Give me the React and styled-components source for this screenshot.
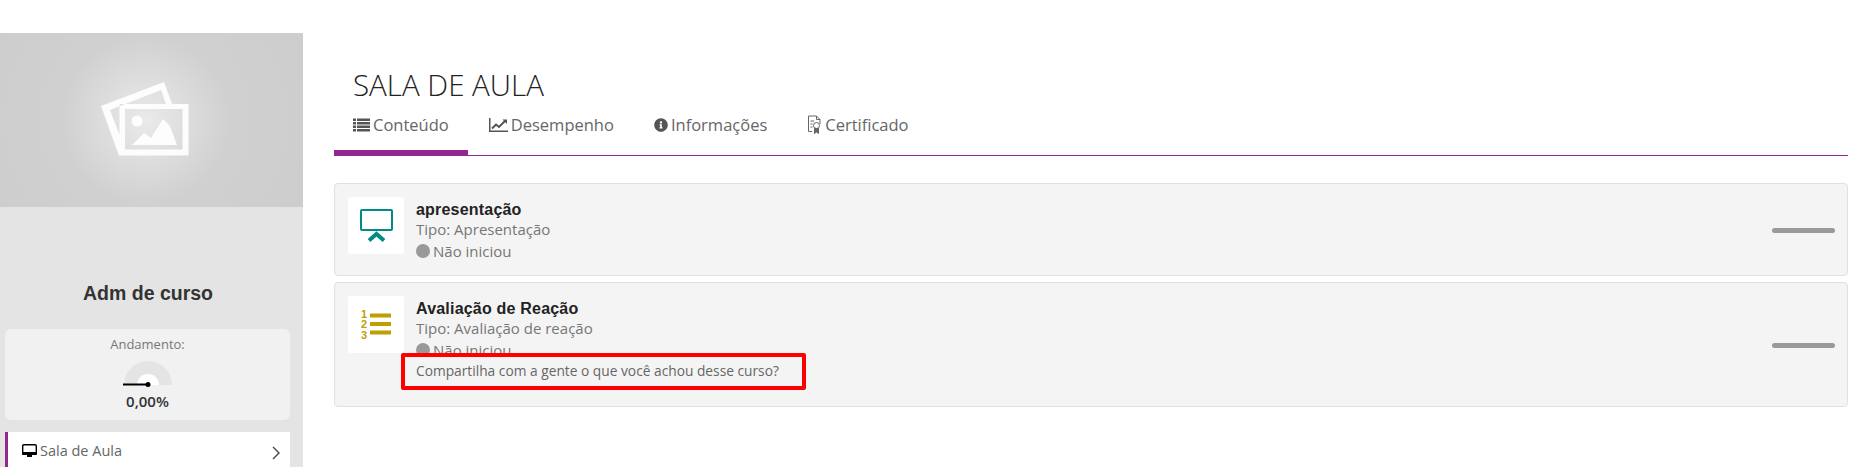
import React from 'react'
import styled, { createGlobalStyle } from 'styled-components';
import { FaInfoCircle } from 'react-icons/fa';

const GlobalStyle = createGlobalStyle`
  html, body {
    margin: 0;
    padding: 0;
    background: #fff;
    font-family: "Open Sans", sans-serif;
    color: #666;
  }
`;

const PhotoIcon = () => (
  <svg width="88" height="74" viewBox="0 0 88 74">
    <path fill="#fff" fillOpacity="0.92" fillRule="evenodd" d="M0 24 L63 0 L71 22 L87.500 22 L87.500 73.500 L18 73.500 Z M9 28 L18.500 53 L18.500 22 L65 22 L60 8 Z M24 27 L81.500 27 L81.500 67.500 L24 67.500 Z" />
    <circle cx="36" cy="39" r="5.500" fill="#fff" fillOpacity="0.92" />
    <path fill="#fff" fillOpacity="0.92" d="M31 63 L43 51 L50 56 L62 37 L69 44 L76 63 Z" />
  </svg>
);

const ListIcon = () => (
  <svg width="17" height="14" viewBox="0 0 17 14" fill="#555">
    <rect x="0" y="0.500" width="3" height="2.500" />
    <rect x="4" y="0.500" width="13" height="2.500" />
    <rect x="0" y="4" width="3" height="2.500" />
    <rect x="4" y="4" width="13" height="2.500" />
    <rect x="0" y="7.500" width="3" height="2.500" />
    <rect x="4" y="7.500" width="13" height="2.500" />
    <rect x="0" y="11" width="3" height="2.500" />
    <rect x="4" y="11" width="13" height="2.500" />
  </svg>
);

const ChartIcon = () => (
  <svg width="19" height="14" viewBox="0 0 19 14" fill="none" stroke="#555">
    <path d="M0.750 0 V13.250 H19" strokeWidth="1.500" />
    <path d="M3 10.500 L7 6.500 L10 9 L16.500 2.500" strokeWidth="2" />
    <path d="M13.500 1.500 H18 V6 Z" fill="#555" stroke="none" />
  </svg>
);

const MonitorIcon = () => (
  <svg width="15" height="14" viewBox="0 0 15 14">
    <rect x="0.700" y="0.700" width="13.600" height="9.600" rx="1.200" fill="none" stroke="#000" strokeWidth="1.400" />
    <rect x="0" y="8" width="15" height="3" rx="1" fill="#000" />
    <rect x="5" y="11" width="5" height="2" fill="#000" />
  </svg>
);

const CertificateIcon = () => (
  <svg width="15" height="19" viewBox="0 0 15 19" fill="none" stroke="#666" strokeWidth="1">
    <path d="M5 16.500 H1.500 V1 H9.500 L13 4.500 V9" />
    <path d="M9.500 1 V4.500 H13" />
    <path d="M3.500 6 H7 M3.500 9 H5.500 M3.500 12 H5.500" />
    <circle cx="9.500" cy="10.500" r="3" />
    <path d="M7.500 13 V18.500 L9.500 17 L11.500 18.500 V13" fill="#666" />
  </svg>
);

const PresentationIcon = () => (
  <svg width="33" height="33" viewBox="0 0 33 33" fill="none" stroke="#008c84">
    <rect x="1" y="1" width="31" height="20" rx="1" strokeWidth="2" />
    <path d="M9 31.500 L16.500 25 L24 31.500" strokeWidth="4" />
  </svg>
);

const RankingIcon = () => (
  <svg width="30" height="30" viewBox="0 0 30 30">
    <rect x="9" y="3.500" width="21" height="4" fill="#bc9f00" />
    <rect x="9" y="12" width="21" height="4" fill="#bc9f00" />
    <rect x="9" y="20.500" width="21" height="4" fill="#bc9f00" />
    <OrderDigit x="0" y="7.500">1</OrderDigit>
    <OrderDigit x="0" y="17.500">2</OrderDigit>
    <OrderDigit x="0" y="28.500">3</OrderDigit>
  </svg>
);

const Gauge = () => (
  <svg width="52" height="28" viewBox="0 0 52 28">
    <path d="M2 25 A24 24 0 0 1 50 25 Z" fill="#e4e4e4" />
    <path d="M15 25 A11 11 0 0 1 37 25 Z" fill="#fff" />
    <path d="M1 24.500 H26" stroke="#000" strokeWidth="2" />
    <circle cx="26" cy="24.500" r="2.500" fill="#000" />
  </svg>
);

const tabs = [
  { name: 'Conteúdo', icon: <ListIcon />, active: true },
  { name: 'Desempenho', icon: <ChartIcon /> },
  { name: 'Informações', icon: <FaInfoCircle size={14} color="#555" /> },
  { name: 'Certificado', icon: <CertificateIcon /> },
];

const App = () => {
  return (
    <Page>
      <GlobalStyle />
      <Sidebar>
        <Cover><PhotoIcon /></Cover>
        <CourseName>Adm de curso</CourseName>
        <ProgressCard>
          <ProgressLabel>Andamento:</ProgressLabel>
          <Gauge />
          <ProgressValue>0,00%</ProgressValue>
        </ProgressCard>
        <MenuItem>
          <MenuLabel><MonitorIcon /> Sala de Aula</MenuLabel>
          <Chevron viewBox="0 0 8 14"><path d="M1 1 L7 7 L1 13" /></Chevron>
        </MenuItem>
      </Sidebar>
      <Main>
        <Heading>SALA DE AULA</Heading>
        <Tabs>
          {tabs.map((tab) => (
            <Tab key={tab.name} $active={tab.active}>{tab.icon}{tab.name}</Tab>
          ))}
        </Tabs>
        <ItemList>
          <Item>
            <ItemThumb><PresentationIcon /></ItemThumb>
            <ItemBody>
              <ItemTitle>apresentação</ItemTitle>
              <ItemText>Tipo: Apresentação</ItemText>
              <ItemStatus><StatusDot />Não iniciou</ItemStatus>
            </ItemBody>
            <ItemBar />
          </Item>
          <Item $tall>
            <ItemThumb><RankingIcon /></ItemThumb>
            <ItemBody>
              <ItemTitle>Avaliação de Reação</ItemTitle>
              <ItemText>Tipo: Avaliação de reação</ItemText>
              <ItemStatus><StatusDot />Não iniciou</ItemStatus>
            </ItemBody>
            <ItemBar />
            <ShareCallout>Compartilha com a gente o que você achou desse curso?</ShareCallout>
          </Item>
        </ItemList>
      </Main>
    </Page>
  );
};

export default App;

const Page = styled.div`
  display: flex;
  height: 467px;
  overflow: hidden;
`;

const Sidebar = styled.aside`
  width: 303px;
  flex-shrink: 0;
  margin-top: 33px;
  background-color: #e4e4e4;
`;

const Cover = styled.div`
  height: 174px;
  box-sizing: border-box;
  padding: 0 14px 3px 0;
  display: flex;
  align-items: center;
  justify-content: center;
  background: radial-gradient(circle at 48% 50%, #eaeaea 0, #dcdcdc 45px, #d0d0d0 85px, #cdcdcd 100%);
`;

const CourseName = styled.h2`
  margin: 75px 0 0;
  height: 23px;
  line-height: 23px;
  text-align: center;
  font-family: "Liberation Sans", sans-serif;
  font-size: 19.500px;
  font-weight: 700;
  color: #333;
  padding-right: 7px;
`;

const ProgressCard = styled.div`
  margin: 24px 13px 0 5px;
  height: 91px;
  box-sizing: border-box;
  padding-top: 6px;
  border-radius: 6px;
  background-color: #f1f1f1;
  display: flex;
  flex-direction: column;
  align-items: center;
`;

const ProgressLabel = styled.div`
  font-size: 13px;
  line-height: 18px;
  color: #777;
  margin-bottom: 7px;
`;

const ProgressValue = styled.div`
  font-size: 15px;
  font-weight: 600;
  line-height: 19px;
  color: #333;
  margin-top: 4px;
`;

const MenuItem = styled.div`
  margin: 12px 13px 0 5px;
  height: 44px;
  box-sizing: border-box;
  padding: 9px 10px 0 14px;
  border-left: 3px solid #92278f;
  background-color: #fff;
  display: flex;
  justify-content: space-between;
  align-items: flex-start;
`;

const MenuLabel = styled.div`
  display: flex;
  align-items: center;
  gap: 3px;
  font-size: 14.500px;
  line-height: 19px;
  color: #666;
`;

const Chevron = styled.svg`
  width: 8px;
  height: 14px;
  margin-top: 5px;
  fill: none;
  stroke: #444;
  stroke-width: 1.400;
`;

const Main = styled.main`
  width: 1514px;
  margin-left: 31px;
`;

const Heading = styled.h1`
  margin: 66px 0 0;
  padding-left: 19px;
  height: 38px;
  line-height: 38px;
  font-size: 29.500px;
  font-weight: 300;
  color: #222;
`;

const Tabs = styled.nav`
  display: flex;
  height: 49px;
  margin-top: 3px;
  box-sizing: border-box;
  border-bottom: 1px solid #92278f;
`;

const Tab = styled.div`
  display: flex;
  align-items: center;
  gap: 3px;
  height: 48px;
  box-sizing: border-box;
  padding: 0 19px 8px;
  font-size: 16.500px;
  color: #666;
  border-bottom: 5px solid ${(props) => (props.$active ? '#92278f' : 'transparent')};
  margin-left: ${(props) => (props.$active ? '0' : '2px')};
`;

const ItemList = styled.div`
  display: flex;
  flex-direction: column;
  gap: 6px;
  margin-top: 27px;
`;

const Item = styled.div`
  position: relative;
  display: flex;
  align-items: flex-start;
  height: ${(props) => (props.$tall ? '125px' : '93px')};
  box-sizing: border-box;
  padding: 13px 0 0 13px;
  border: 1px solid #e0e0e0;
  border-radius: 4px;
  background-color: #f4f4f4;
`;

const ItemThumb = styled.div`
  width: 56px;
  height: 57px;
  flex-shrink: 0;
  display: flex;
  align-items: center;
  justify-content: center;
  border-radius: 3px;
  background-color: #fff;
`;

const ItemBody = styled.div`
  margin: 3px 0 0 12px;
  flex: 1;
`;

const ItemTitle = styled.div`
  font-family: "Liberation Sans", sans-serif;
  font-size: 16px;
  font-weight: 700;
  letter-spacing: 0.200px;
  line-height: 19px;
  color: #222;
`;

const ItemText = styled.div`
  font-size: 15px;
  line-height: 20px;
  color: #777;
`;

const ItemStatus = styled.div`
  display: flex;
  align-items: center;
  gap: 3px;
  font-size: 15px;
  line-height: 24px;
  color: #777;
`;

const StatusDot = styled.span`
  width: 14px;
  height: 14px;
  border-radius: 50%;
  background-color: #999;
`;

const ItemBar = styled.div`
  position: absolute;
  right: 12px;
  top: calc(50% - 1.500px);
  width: 63px;
  height: 5px;
  border-radius: 3px;
  background-color: #999;
`;

const ShareCallout = styled.div`
  position: absolute;
  left: 66px;
  top: 70px;
  width: 405px;
  height: 37px;
  box-sizing: border-box;
  padding-left: 11px;
  border: 4px solid #f00;
  border-radius: 2px;
  background-color: #f4f4f4;
  font-size: 13.750px;
  line-height: 27px;
  color: #666;
  white-space: nowrap;
`;

const OrderDigit = styled.text`
  font-family: "Liberation Sans", sans-serif;
  font-size: 11px;
  font-weight: 700;
  fill: #bc9f00;
`;
